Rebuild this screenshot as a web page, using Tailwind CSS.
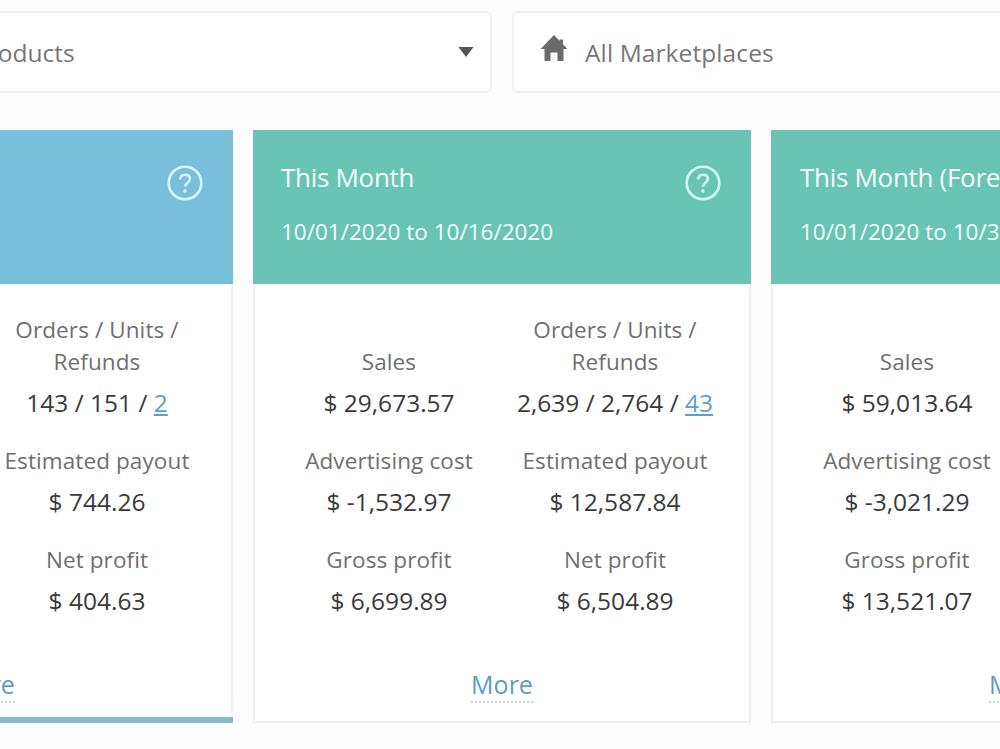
<!DOCTYPE html>
<html lang="en">
<head>
    <meta charset="UTF-8">
    <meta name="viewport" content="width=device-width, initial-scale=1.0">
    <title>Dashboard</title>
    <script src="https://cdn.jsdelivr.net/npm/@tailwindcss/browser@4"></script>
</head>
<body class="bg-[#fdfdfd] font-['Open_Sans',sans-serif] w-[1000px] h-[749px] overflow-hidden">

    <!-- filters -->
    <div class="flex gap-[20px] pt-[11px] h-[130px] -ml-[265px] w-[1556px]">
        <div class="flex items-center justify-between w-[757px] h-[82px] shrink-0 bg-white border-2 border-[#f1f1f1] rounded-md pl-[236px] pr-4">
            <span class="text-[24.5px] text-[#777] whitespace-nowrap pt-0.5">Products</span>
            <svg class="w-4 h-[10px]" viewBox="0 0 16 10"><path d="M0.5 0h15L8 10z" fill="#555"/></svg>
        </div>
        <div class="flex items-center w-[757px] h-[82px] shrink-0 bg-white border-2 border-[#f1f1f1] rounded-md pl-[26px]">
            <svg class="w-[28px] h-[26px] -mt-[8px] mr-[17px]" viewBox="0 0 28 26"><path d="M14 0L0.500 14h4V26h6v-8.500h7V26h6V14h4L23 9.300V4.500h-3.500v1.200z" fill="#6b6b6b"/></svg>
            <span class="text-[24.5px] text-[#777] tracking-[0.1px] whitespace-nowrap pt-0.5">All Marketplaces</span>
        </div>
    </div>

    <!-- cards -->
    <div class="flex gap-[20px] -ml-[265px] w-[1556px]">

        <div class="w-[498px] h-[593px] shrink-0 flex flex-col bg-white border-x-2 border-[#f1f1f1]">
            <div class="h-[154px] shrink-0 -mx-[2px] bg-[#7abfd9] pr-[30px] pt-[35px] flex justify-end">
                <svg class="w-9 h-9" viewBox="0 0 36 36" fill="none" stroke="#d6f7ff"><circle cx="18" cy="18" r="16.300" stroke-width="2.600"/><path d="M13.200 14.500c0-3 2-4.700 4.900-4.700s4.800 1.700 4.800 4.200c0 3.700-4.800 3.700-4.800 7.600" stroke-width="2.600"/><circle cx="18" cy="26" r="1" stroke-width="1.500"/></svg>
            </div>
            <div class="grid grid-cols-2 items-end text-center px-[21px] pt-[30px] gap-y-[25px] whitespace-nowrap">
                <div class="col-start-2">
                    <p class="text-[22.5px] leading-8 text-[#6f6f6f] tracking-[0.1px]">Orders / Units /<br>Refunds</p>
                    <p class="text-[24.5px] leading-[34px] text-[#3a3a3a] mt-2">143 / 151 / <a class="text-[#5b9fd0] underline underline-offset-2 decoration-2">2</a></p>
                </div>
                <div class="col-start-2">
                    <p class="text-[22.5px] leading-8 text-[#6f6f6f] tracking-[0.1px]">Estimated payout</p>
                    <p class="text-[24.5px] leading-[34px] text-[#3a3a3a] mt-2">$ 744.26</p>
                </div>
                <div class="col-start-2">
                    <p class="text-[22.5px] leading-8 text-[#6f6f6f] tracking-[0.1px]">Net profit</p>
                    <p class="text-[24.5px] leading-[34px] text-[#3a3a3a] mt-2">$ 404.63</p>
                </div>
            </div>
            <div class="flex justify-center mt-[49px]">
                <a class="text-[25px] leading-[34px] text-[#5d9cc9] border-b-2 border-dotted border-[#ccd5dd]">More</a>
            </div>
            <div class="h-[6px] shrink-0 mt-auto -mx-[2px] bg-[#84bcca]"></div>
        </div>

        <div class="w-[498px] h-[593px] shrink-0 flex flex-col bg-white border-x-2 border-b-2 border-[#f1f1f1]">
            <div class="h-[154px] shrink-0 -mx-[2px] bg-[#69c4b3] pl-[28px] pr-[30px] pt-[35px] flex justify-between text-[#f3fffc]">
                <div class="-mt-[6px] whitespace-nowrap">
                    <h2 class="text-[26px] leading-9 tracking-[-0.3px]">This Month</h2>
                    <p class="text-[22.5px] leading-8 mt-[21px]">10/01/2020 to 10/16/2020</p>
                </div>
                <svg class="w-9 h-9" viewBox="0 0 36 36" fill="none" stroke="#d0fff0"><circle cx="18" cy="18" r="16.300" stroke-width="2.600"/><path d="M13.200 14.500c0-3 2-4.700 4.900-4.700s4.800 1.700 4.800 4.200c0 3.700-4.800 3.700-4.800 7.600" stroke-width="2.600"/><circle cx="18" cy="26" r="1" stroke-width="1.500"/></svg>
            </div>
            <div class="grid grid-cols-2 items-end text-center px-[21px] pt-[30px] gap-y-[25px] whitespace-nowrap">
                <div>
                    <p class="text-[22.5px] leading-8 text-[#6f6f6f] tracking-[0.1px]">Sales</p>
                    <p class="text-[24.5px] leading-[34px] text-[#3a3a3a] mt-2">$ 29,673.57</p>
                </div>
                <div>
                    <p class="text-[22.5px] leading-8 text-[#6f6f6f] tracking-[0.1px]">Orders / Units /<br>Refunds</p>
                    <p class="text-[24.5px] leading-[34px] text-[#3a3a3a] mt-2">2,639 / 2,764 / <a class="text-[#5b9fd0] underline underline-offset-2 decoration-2">43</a></p>
                </div>
                <div>
                    <p class="text-[22.5px] leading-8 text-[#6f6f6f] tracking-[0.1px]">Advertising cost</p>
                    <p class="text-[24.5px] leading-[34px] text-[#3a3a3a] mt-2">$ -1,532.97</p>
                </div>
                <div>
                    <p class="text-[22.5px] leading-8 text-[#6f6f6f] tracking-[0.1px]">Estimated payout</p>
                    <p class="text-[24.5px] leading-[34px] text-[#3a3a3a] mt-2">$ 12,587.84</p>
                </div>
                <div>
                    <p class="text-[22.5px] leading-8 text-[#6f6f6f] tracking-[0.1px]">Gross profit</p>
                    <p class="text-[24.5px] leading-[34px] text-[#3a3a3a] mt-2">$ 6,699.89</p>
                </div>
                <div>
                    <p class="text-[22.5px] leading-8 text-[#6f6f6f] tracking-[0.1px]">Net profit</p>
                    <p class="text-[24.5px] leading-[34px] text-[#3a3a3a] mt-2">$ 6,504.89</p>
                </div>
            </div>
            <div class="flex justify-center mt-[49px]">
                <a class="text-[25px] leading-[34px] text-[#5d9cc9] border-b-2 border-dotted border-[#ccd5dd]">More</a>
            </div>
        </div>

        <div class="w-[498px] h-[593px] shrink-0 flex flex-col bg-white border-x-2 border-b-2 border-[#f1f1f1]">
            <div class="h-[154px] shrink-0 -mx-[2px] bg-[#69c4b3] pl-[29px] pt-[35px] text-[#f3fffc]">
                <div class="-mt-[6px] whitespace-nowrap">
                    <h2 class="text-[26px] leading-9 tracking-[-0.3px]">This Month (Forecast)</h2>
                    <p class="text-[22.5px] leading-8 mt-[21px]">10/01/2020 to 10/31/2020</p>
                </div>
            </div>
            <div class="grid grid-cols-2 text-center px-[21px] pt-[62px] gap-y-[25px] whitespace-nowrap">
                <div class="col-start-1">
                    <p class="text-[22.5px] leading-8 text-[#6f6f6f] tracking-[0.1px]">Sales</p>
                    <p class="text-[24.5px] leading-[34px] text-[#3a3a3a] mt-2">$ 59,013.64</p>
                </div>
                <div class="col-start-1">
                    <p class="text-[22.5px] leading-8 text-[#6f6f6f] tracking-[0.1px]">Advertising cost</p>
                    <p class="text-[24.5px] leading-[34px] text-[#3a3a3a] mt-2">$ -3,021.29</p>
                </div>
                <div class="col-start-1">
                    <p class="text-[22.5px] leading-8 text-[#6f6f6f] tracking-[0.1px]">Gross profit</p>
                    <p class="text-[24.5px] leading-[34px] text-[#3a3a3a] mt-2">$ 13,521.07</p>
                </div>
            </div>
            <div class="flex justify-center mt-[49px]">
                <a class="text-[25px] leading-[34px] text-[#5d9cc9] border-b-2 border-dotted border-[#ccd5dd]">More</a>
            </div>
        </div>
    </div>
</body>
</html>
